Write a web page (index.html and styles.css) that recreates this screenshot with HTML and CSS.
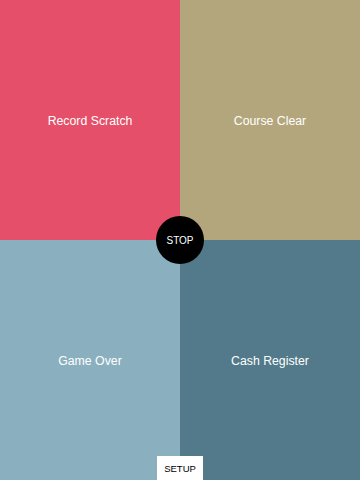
FILE: index.html
```html
<!DOCTYPE html>
<html>
<head>
<meta charset="utf-8">
<link rel="stylesheet" href="styles.css">
</head>
<body>
<div class="board">
  <div class="pad pad-red">Record Scratch</div>
  <div class="pad pad-tan">Course Clear</div>
  <div class="pad pad-light">Game Over</div>
  <div class="pad pad-dark">Cash Register</div>
  <button class="stop">STOP</button>
  <button class="setup">SETUP</button>
</div>
</body>
</html>
```

FILE: styles.css
```css
html, body {
  margin: 0;
  padding: 0;
}
body {
  font-family: "Liberation Sans", Arial, sans-serif;
}
.board {
  position: relative;
  width: 360px;
  height: 480px;
  display: grid;
  grid-template-columns: 180px 180px;
  grid-template-rows: 240px 240px;
}
.pad {
  display: flex;
  align-items: center;
  justify-content: center;
  padding-top: 2px;
  color: #fff;
  font-size: 12.3px;
}
.pad-red { background: #e54f69; }
.pad-tan { background: #b3a67c; }
.pad-light { background: #8aafbe; }
.pad-dark { background: #527a8a; }
.stop {
  position: absolute;
  left: 156px;
  top: 216px;
  width: 48px;
  height: 48px;
  border-radius: 50%;
  border: none;
  background: #000;
  color: #fff;
  font-family: "Liberation Sans", Arial, sans-serif;
  font-size: 10px;
  padding: 0;
}
.setup {
  position: absolute;
  left: 157px;
  top: 456px;
  width: 46px;
  height: 24px;
  border: none;
  background: #fff;
  color: #000;
  font-family: "Liberation Sans", Arial, sans-serif;
  font-size: 9.5px;
  padding: 0;
}
```
